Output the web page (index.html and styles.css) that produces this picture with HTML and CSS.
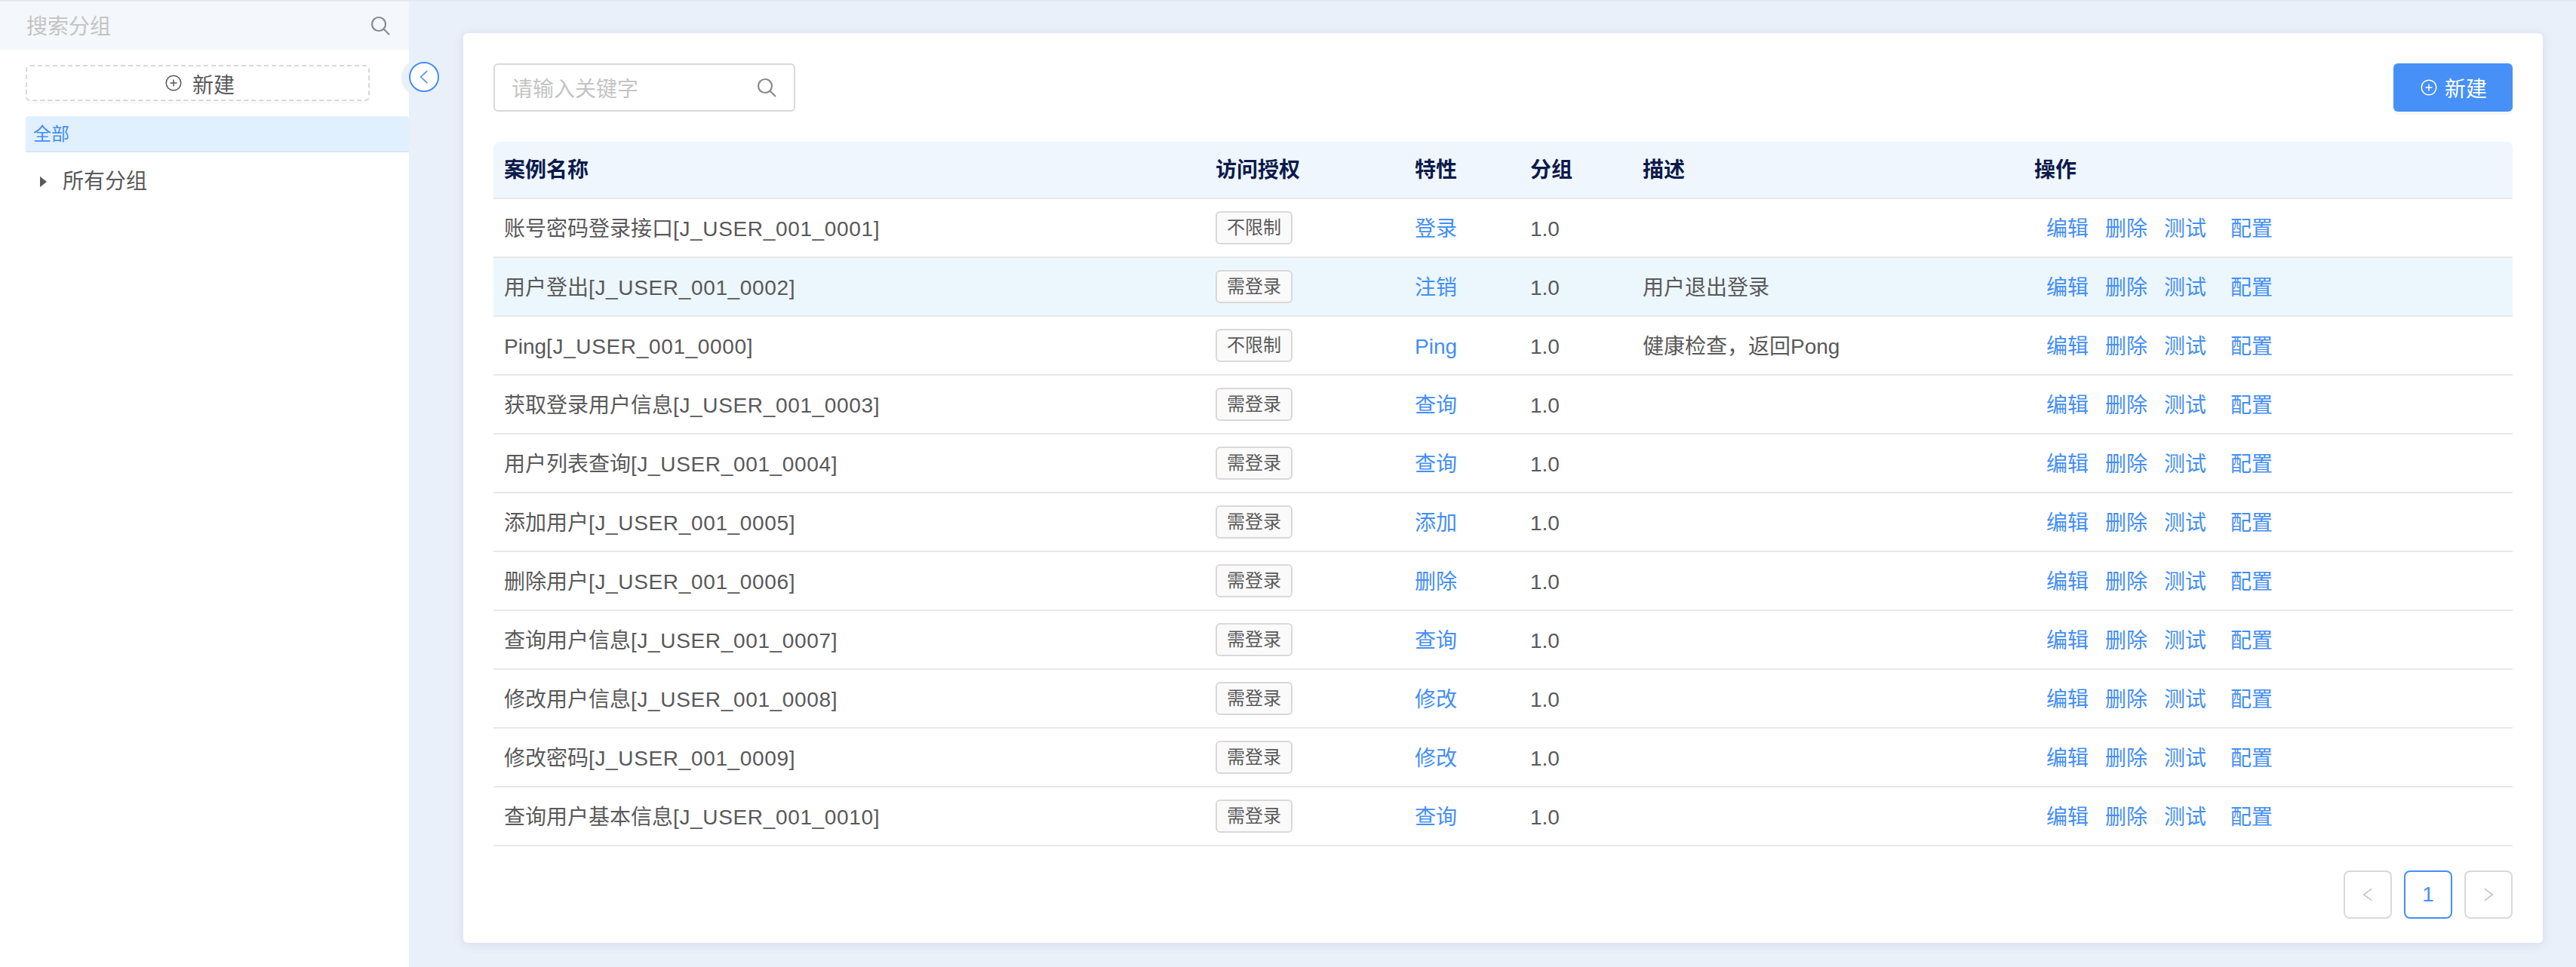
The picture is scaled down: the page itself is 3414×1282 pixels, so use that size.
FILE: index.html
```html
<!DOCTYPE html>
<html>

<head>
    <meta charset="utf-8">
    <title>案例列表</title>
    <link rel="stylesheet" href="styles.css">
</head>

<body>
    <div class="app">
        <aside class="sidebar">
            <div class="sideSearch">
                <span class="sidePlaceholder">搜索分组</span>
                <svg class="searchIcon" viewBox="0 0 28 28"><circle cx="12" cy="12" r="9"/><path d="M18.5 18.5L26 26"/></svg>
            </div>
            <div class="sideNew">
                <svg class="plusIcon" viewBox="0 0 22 22"><circle cx="11" cy="11" r="9.8"/><path d="M11 6.5v9M6.5 11h9"/></svg>
                <span>新建</span>
            </div>
            <div class="sideAll">全部</div>
            <div class="treeRow">
                <span class="treeArrow"></span>
                <span>所有分组</span>
            </div>
            <div class="collapseHalo"></div>
            <div class="collapseBtn">
                <svg viewBox="0 0 14 22"><path d="M12 1.5L2 11l10 9.5"/></svg>
            </div>
        </aside>

        <main class="main">
            <section class="card">
                <div class="toolbar">
                    <div class="keyword">
                        <span class="keywordText">请输入关键字</span>
                        <svg class="searchIcon" viewBox="0 0 28 28"><circle cx="12" cy="12" r="9"/><path d="M18.5 18.5L26 26"/></svg>
                    </div>
                    <div class="newBtn">
                        <svg class="plusIcon" viewBox="0 0 22 22"><circle cx="11" cy="11" r="9.8"/><path d="M11 6.5v9M6.5 11h9"/></svg>
                        <span>新建</span>
                    </div>
                </div>

                <table class="caseTable">
                    <colgroup>
                        <col class="colName"><col class="colAuth"><col class="colFeature"><col class="colGroup"><col class="colDesc"><col class="colOps">
                    </colgroup>
                    <thead>
                        <tr><th>案例名称</th><th>访问授权</th><th>特性</th><th>分组</th><th>描述</th><th>操作</th></tr>
                    </thead>
                    <tbody>
                        <tr>
                            <td>账号密码登录接口<span class="code">[J_USER_001_0001]</span></td><td><span class="tag">不限制</span></td><td class="link">登录</td><td>1.0</td><td></td>
                            <td class="ops"><a>编辑</a><a>删除</a><a>测试</a><a>配置</a></td>
                        </tr>
                        <tr class="active">
                            <td>用户登出<span class="code">[J_USER_001_0002]</span></td><td><span class="tag">需登录</span></td><td class="link">注销</td><td>1.0</td><td>用户退出登录</td>
                            <td class="ops"><a>编辑</a><a>删除</a><a>测试</a><a>配置</a></td>
                        </tr>
                        <tr>
                            <td>Ping<span class="code">[J_USER_001_0000]</span></td><td><span class="tag">不限制</span></td><td class="link">Ping</td><td>1.0</td><td>健康检查，返回Pong</td>
                            <td class="ops"><a>编辑</a><a>删除</a><a>测试</a><a>配置</a></td>
                        </tr>
                        <tr>
                            <td>获取登录用户信息<span class="code">[J_USER_001_0003]</span></td><td><span class="tag">需登录</span></td><td class="link">查询</td><td>1.0</td><td></td>
                            <td class="ops"><a>编辑</a><a>删除</a><a>测试</a><a>配置</a></td>
                        </tr>
                        <tr>
                            <td>用户列表查询<span class="code">[J_USER_001_0004]</span></td><td><span class="tag">需登录</span></td><td class="link">查询</td><td>1.0</td><td></td>
                            <td class="ops"><a>编辑</a><a>删除</a><a>测试</a><a>配置</a></td>
                        </tr>
                        <tr>
                            <td>添加用户<span class="code">[J_USER_001_0005]</span></td><td><span class="tag">需登录</span></td><td class="link">添加</td><td>1.0</td><td></td>
                            <td class="ops"><a>编辑</a><a>删除</a><a>测试</a><a>配置</a></td>
                        </tr>
                        <tr>
                            <td>删除用户<span class="code">[J_USER_001_0006]</span></td><td><span class="tag">需登录</span></td><td class="link">删除</td><td>1.0</td><td></td>
                            <td class="ops"><a>编辑</a><a>删除</a><a>测试</a><a>配置</a></td>
                        </tr>
                        <tr>
                            <td>查询用户信息<span class="code">[J_USER_001_0007]</span></td><td><span class="tag">需登录</span></td><td class="link">查询</td><td>1.0</td><td></td>
                            <td class="ops"><a>编辑</a><a>删除</a><a>测试</a><a>配置</a></td>
                        </tr>
                        <tr>
                            <td>修改用户信息<span class="code">[J_USER_001_0008]</span></td><td><span class="tag">需登录</span></td><td class="link">修改</td><td>1.0</td><td></td>
                            <td class="ops"><a>编辑</a><a>删除</a><a>测试</a><a>配置</a></td>
                        </tr>
                        <tr>
                            <td>修改密码<span class="code">[J_USER_001_0009]</span></td><td><span class="tag">需登录</span></td><td class="link">修改</td><td>1.0</td><td></td>
                            <td class="ops"><a>编辑</a><a>删除</a><a>测试</a><a>配置</a></td>
                        </tr>
                        <tr>
                            <td>查询用户基本信息<span class="code">[J_USER_001_0010]</span></td><td><span class="tag">需登录</span></td><td class="link">查询</td><td>1.0</td><td></td>
                            <td class="ops"><a>编辑</a><a>删除</a><a>测试</a><a>配置</a></td>
                        </tr>
                    </tbody>
                </table>

                <div class="pager">
                    <div class="pageBtn"><svg viewBox="0 0 16 22"><path d="M14 2L2 11l12 9"/></svg></div>
                    <div class="pageBtn current">1</div>
                    <div class="pageBtn"><svg viewBox="0 0 16 22"><path d="M2 2l12 9-12 9"/></svg></div>
                </div>
            </section>
        </main>
    </div>
</body>

</html>
```

FILE: styles.css
```css
* {
    box-sizing: border-box;
}

body {
    margin: 0;
    background: #eaf0f9;
    color: #595959;
    font-family: "Liberation Sans", "Noto Sans CJK SC", sans-serif;
    font-size: 28px;
    line-height: 40px;
}

.app {
    display: flex;
    height: 1282px;
    border-top: 2px solid #e3e9f1;
    overflow: hidden;
}

svg {
    fill: none;
    stroke: currentColor;
}

/* Left group panel */

.sidebar {
    position: relative;
    flex: 0 0 542px;
    background: #fff;
}

.sideSearch {
    display: flex;
    align-items: center;
    justify-content: space-between;
    height: 64px;
    padding: 0 24px 0 35px;
    background: #f4f7fb;
}

.sidePlaceholder {
    padding-top: 4px;
    color: #c4c4c4;
}

.searchIcon {
    width: 28px;
    height: 28px;
    color: #8a8a8a;
    stroke-width: 2.2;
}

.sideNew {
    display: flex;
    align-items: center;
    justify-content: center;
    gap: 14px;
    width: 456px;
    height: 48px;
    margin: 20px 0 0 34px;
    padding-left: 6px;
    border: 2px dashed #d9d9d9;
    border-radius: 6px;
    box-shadow: 0 4px 0 #fafafa;
}

.sideNew span {
    padding-top: 8px;
}

.plusIcon {
    width: 22px;
    height: 22px;
    stroke-width: 1.5;
}

.sideAll {
    height: 48px;
    margin: 20px 0 0 34px;
    padding: 4px 0 0 10px;
    border-bottom: 2px solid #d8e6f5;
    border-radius: 4px 4px 0 0;
    background: #e0f0ff;
    color: #448ef7;
    font-size: 24px;
}

.treeRow {
    display: flex;
    align-items: center;
    height: 78px;
    padding-left: 53px;
}

.treeArrow {
    width: 0;
    height: 0;
    margin-right: 21px;
    border-left: 9px solid #595959;
    border-top: 7px solid transparent;
    border-bottom: 7px solid transparent;
}

.collapseHalo {
    position: absolute;
    top: 76px;
    left: 532px;
    width: 50px;
    height: 50px;
    border-radius: 50%;
    background: #eaf0f9;
}

.collapseBtn {
    position: absolute;
    top: 80px;
    left: 542px;
    display: flex;
    align-items: center;
    justify-content: center;
    width: 40px;
    height: 40px;
    border: 2px solid #448ef7;
    border-radius: 50%;
    background: #fff;
    color: #448ef7;
}

.collapseBtn svg {
    width: 12px;
    height: 20px;
    stroke-width: 1.8;
}

/* Main card */

.main {
    flex: 1;
    padding: 42px 44px 0 72px;
}

.card {
    height: 1206px;
    padding: 40px 40px 0;
    border-radius: 6px;
    background: #fff;
    box-shadow: 0 2px 14px rgba(80, 100, 150, 0.14);
}

.toolbar {
    display: flex;
    justify-content: space-between;
    height: 64px;
}

.keyword {
    display: flex;
    align-items: center;
    justify-content: space-between;
    width: 400px;
    padding: 0 22px;
    border: 2px solid #d9d9d9;
    border-radius: 6px;
}

.keywordText {
    padding-top: 6px;
    color: #c4c4c4;
}

.newBtn {
    display: flex;
    align-items: center;
    justify-content: center;
    gap: 10px;
    width: 158px;
    padding-left: 2px;
    border-radius: 6px;
    background: #4690f7;
    color: #fff;
    box-shadow: 0 4px 0 #f7f7f7;
}

.newBtn span {
    padding-top: 6px;
}

/* Case table */

.caseTable {
    width: 100%;
    margin-top: 40px;
    border-collapse: separate;
    border-spacing: 0;
    table-layout: fixed;
}

.colName { width: 943px; }
.colAuth { width: 264px; }
.colFeature { width: 153px; }
.colGroup { width: 149px; }
.colDesc { width: 519px; }
.colOps { width: 648px; }

.caseTable th {
    height: 76px;
    padding: 2px 14px 0;
    border-bottom: 2px solid #e8e8e8;
    background: #eff6fd;
    color: #0c1a4b;
    font-weight: 600;
    text-align: left;
}

.caseTable th:first-child {
    border-top-left-radius: 8px;
}

.caseTable th:last-child {
    border-top-right-radius: 8px;
}

.caseTable td {
    height: 78px;
    padding: 4px 14px 0;
    border-bottom: 2px solid #e8e8e8;
}

.caseTable td:nth-child(2) {
    padding-top: 0;
}

.caseTable tr.active td {
    background: #ecf6fd;
}

.caseTable td.link {
    color: #448ef7;
}

.code {
    letter-spacing: 0.65px;
}

.tag {
    display: inline-block;
    width: 102px;
    height: 44px;
    border: 2px solid #d9d9d9;
    border-radius: 6px;
    background: #fafafa;
    font-size: 24px;
    line-height: 40px;
    text-align: center;
    vertical-align: middle;
}

.caseTable td.ops {
    padding-left: 30px;
    color: #448ef7;
}

.ops a {
    margin-right: 22px;
}

.ops a:nth-child(3) {
    margin-right: 32px;
}

/* Pagination */

.pager {
    display: flex;
    justify-content: flex-end;
    gap: 16px;
    margin-top: 32px;
}

.pageBtn {
    display: flex;
    align-items: center;
    justify-content: center;
    width: 64px;
    height: 64px;
    border: 2px solid #d9d9d9;
    border-radius: 8px;
    color: #c4c4c4;
}

.pageBtn svg {
    width: 14px;
    height: 20px;
    stroke-width: 1.8;
}

.pageBtn.current {
    border-color: #448ef7;
    color: #448ef7;
}
```
